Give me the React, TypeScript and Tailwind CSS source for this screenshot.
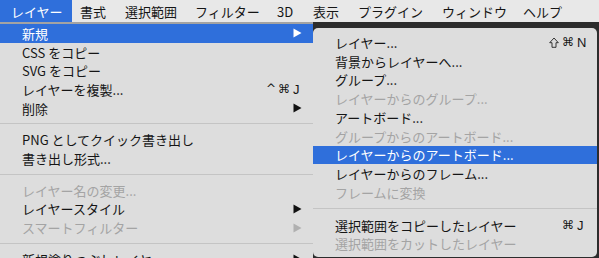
import React from "react";

type Item =
  | { sep: true }
  | {
      sep?: false;
      label: string;
      disabled?: boolean;
      active?: boolean;
      arrow?: boolean;
      mods?: string;
      shift?: boolean;
      keyChar?: string;
    };

const leftItems: Item[] = [
  { label: "新規", active: true, arrow: true },
  { label: "CSS をコピー" },
  { label: "SVG をコピー" },
  { label: "レイヤーを複製...", mods: "^⌘", keyChar: "J" },
  { label: "削除", arrow: true },
  { sep: true },
  { label: "PNG としてクイック書き出し" },
  { label: "書き出し形式..." },
  { sep: true },
  { label: "レイヤー名の変更...", disabled: true },
  { label: "レイヤースタイル", arrow: true },
  { label: "スマートフィルター", disabled: true, arrow: true },
  { sep: true },
  { label: "新規塗りつぶしレイヤー", arrow: true },
];

const subItems: Item[] = [
  { label: "レイヤー...", shift: true, mods: "⌘", keyChar: "N" },
  { label: "背景からレイヤーへ..." },
  { label: "グループ..." },
  { label: "レイヤーからのグループ...", disabled: true },
  { label: "アートボード..." },
  { label: "グループからのアートボード...", disabled: true },
  { label: "レイヤーからのアートボード...", active: true },
  { label: "レイヤーからのフレーム..." },
  { label: "フレームに変換", disabled: true },
  { sep: true },
  { label: "選択範囲をコピーしたレイヤー", mods: "⌘", keyChar: "J" },
  { label: "選択範囲をカットしたレイヤー", disabled: true },
];

const menuBar: { label: string; w: string }[] = [
  { label: "書式", w: "w-[45px]" },
  { label: "選択範囲", w: "w-[70px]" },
  { label: "フィルター", w: "w-[82px]" },
  { label: "3D", w: "w-[36px]" },
  { label: "表示", w: "w-[45px]" },
  { label: "プラグイン", w: "w-[84px]" },
  { label: "ウィンドウ", w: "w-[81px]" },
  { label: "ヘルプ", w: "w-[60px]" },
];

function Arrow({ color }: { color: string }) {
  return (
    <svg width="9" height="10" viewBox="0 0 9 10" className="block">
      <path d="M0.5 0.5 L8.5 5 L0.5 9.5 Z" fill={color} />
    </svg>
  );
}

function ShiftIcon() {
  return (
    <svg width="10" height="11" viewBox="0 0 10 11" className="block mr-[3px]">
      <path
        d="M5 1 L9.3 5.7 H7 V10.3 H3 V5.7 H0.7 Z"
        fill="none"
        stroke="#222222"
        strokeWidth="0.9"
      />
    </svg>
  );
}

function Row({ item, rowH, side }: { item: Item; rowH: string; side: "left" | "right" }) {
  if (item.sep) {
    return (
      <div className={side === "left" ? "h-[13px] flex items-center" : "h-[14px] flex items-center"}>
        <div className="w-full h-px bg-[#c4c4c4]" />
      </div>
    );
  }
  const textColor = item.active ? "text-white" : item.disabled ? "text-[#a4a4a4]" : "text-[#151515]";
  const arrowColor = item.active ? "#ffffff" : item.disabled ? "#b0b0b0" : "#111111";
  return (
    <div
      className={`${rowH} flex items-center pl-[22px] ${side === "left" ? "pr-[11px]" : "pr-[8px]"} ${
        item.active ? "bg-[#2f6fdb]" : ""
      } ${textColor}`}
    >
      <span className="text-[13px] leading-none whitespace-nowrap">{item.label}</span>
      <div className="ml-auto flex items-center">
        {item.arrow && <Arrow color={arrowColor} />}
        {item.keyChar && (
          <div className="flex items-center">
            {item.shift && <ShiftIcon />}
            <span className="text-[12px] leading-none font-['DejaVu_Sans'] tracking-[2px]">{item.mods}</span>
            <span
              className={`text-[13px] leading-none font-['Liberation_Sans'] ${
                side === "left" ? "w-[9px]" : "w-[12px]"
              } ml-[1px]`}
            >
              {item.keyChar}
            </span>
          </div>
        )}
      </div>
    </div>
  );
}

export default function App() {
  return (
    <div className="w-[599px] h-[258px] overflow-hidden bg-[#2c2c2c] flex flex-col font-['Noto_Sans_CJK_JP',sans-serif]">
      <div className="h-[22px] bg-[#e8e8e8] flex items-stretch text-[13px] leading-none text-[#151515] shrink-0">
        <div className="bg-[#2f6fdb] text-white w-[72px] pl-[11px] flex items-center">レイヤー</div>
        {menuBar.map((m) => (
          <div key={m.label} className={`${m.w} pl-[8px] flex items-center whitespace-nowrap`}>
            {m.label}
          </div>
        ))}
      </div>
      <div className="flex flex-1 min-h-0">
        <div className="w-[313px] shrink-0 bg-[#dddddd] border-t-2 border-[#a3a3a3]">
          {leftItems.map((it, i) => (
            <Row key={i} item={it} rowH="h-[18.7px]" side="left" />
          ))}
        </div>
        <div className="flex-1 pt-[6px] pr-[2px]">
          <div className="bg-[#dddddd] rounded-[5px] pt-[5px] pb-[4px] overflow-hidden">
            {subItems.map((it, i) => (
              <Row key={i} item={it} rowH="h-[18.75px]" side="right" />
            ))}
          </div>
        </div>
      </div>
    </div>
  );
}
